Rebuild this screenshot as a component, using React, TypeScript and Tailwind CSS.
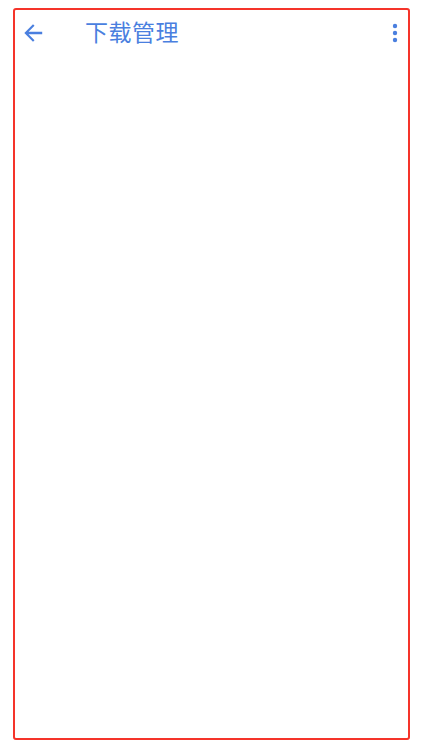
import React from "react";

function BackIcon() {
  return (
    <svg viewBox="0 0 24 24" className="h-[26px] w-[26px]" fill="#4a7fdf">
      <path d="M20.5 10.9H7.9l5.5-5.5L12 4 4 12l8 8 1.4-1.4-5.5-5.5h12.6z" />
    </svg>
  );
}

function MoreIcon() {
  return (
    <svg viewBox="0 0 8 24" className="h-6 w-2" fill="#4a7fdf">
      <circle cx="4" cy="5" r="2.2" />
      <circle cx="4" cy="12" r="2.2" />
      <circle cx="4" cy="19" r="2.2" />
    </svg>
  );
}

export default function App() {
  return (
    <div className="h-[750px] w-[422px] bg-white pt-2 pl-[13px] pr-3 font-['Noto_Sans_CJK_SC',sans-serif]">
      <div className="h-[732px] rounded-[3px] border-[2.5px] border-[#f5342a] bg-white">
        <header className="flex h-[46px] items-center pl-[5px] pr-[9px]">
          <button className="flex h-[26px] w-[26px] items-center justify-center">
            <BackIcon />
          </button>
          <h1 className="-mt-[3px] ml-[39px] text-[23px] leading-none text-[#4a7fdf] tracking-[0.5px]">
            下载管理
          </h1>
          <button className="ml-auto flex h-6 w-2 items-center justify-center">
            <MoreIcon />
          </button>
        </header>
      </div>
    </div>
  );
}
